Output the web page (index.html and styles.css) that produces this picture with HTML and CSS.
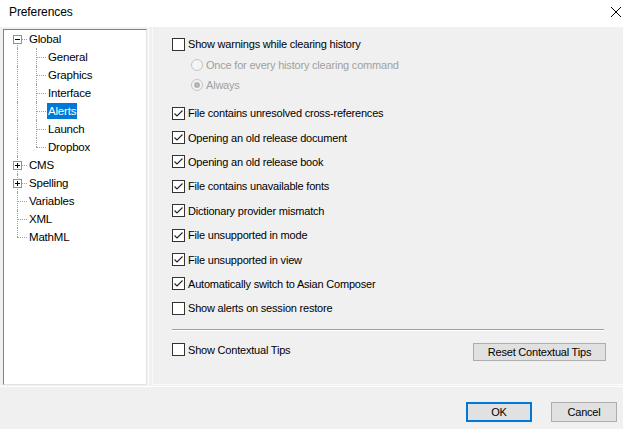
FILE: index.html
```html
<!DOCTYPE html>
<html>
<head>
<meta charset="utf-8">
<title>Preferences</title>
<link rel="stylesheet" href="styles.css">
</head>
<body>
<div class="window">
  <div class="titlebar">
    <span class="title">Preferences</span>
    <svg class="close" width="10" height="10" viewBox="0 0 10 10"><path d="M0 0 L10 10 M10 0 L0 10" stroke="#000" stroke-width="1" fill="none"/></svg>
  </div>
  <div class="main">
    <div class="tree">
      <div class="trow"><span class="cell vfirst hz"><span class="exp minus"></span></span><span class="label">Global</span></div>
      <div class="trow"><span class="cell vfull"></span><span class="cell vfull hz"></span><span class="label">General</span></div>
      <div class="trow"><span class="cell vfull"></span><span class="cell vfull hz"></span><span class="label">Graphics</span></div>
      <div class="trow"><span class="cell vfull"></span><span class="cell vfull hz"></span><span class="label">Interface</span></div>
      <div class="trow"><span class="cell vfull"></span><span class="cell vfull hz"></span><span class="label selected">Alerts</span></div>
      <div class="trow"><span class="cell vfull"></span><span class="cell vfull hz"></span><span class="label">Launch</span></div>
      <div class="trow"><span class="cell vfull"></span><span class="cell vlast hz"></span><span class="label">Dropbox</span></div>
      <div class="trow"><span class="cell vfull hz"><span class="exp plus"></span></span><span class="label">CMS</span></div>
      <div class="trow"><span class="cell vfull hz"><span class="exp plus"></span></span><span class="label">Spelling</span></div>
      <div class="trow"><span class="cell vfull hz"></span><span class="label">Variables</span></div>
      <div class="trow"><span class="cell vfull hz"></span><span class="label">XML</span></div>
      <div class="trow"><span class="cell vlast hz"></span><span class="label">MathML</span></div>
    </div>
    <div class="panel">
      <div class="panel-inner">
        <div class="opt first">
          <svg class="cb" viewBox="0 0 13 13"><rect x="0.5" y="0.5" width="12" height="12" fill="#fff" stroke="#333"/></svg>
          <span>Show warnings while clearing history</span>
        </div>
        <div class="opt sub r1 disabled">
          <span class="rb"></span><span>Once for every history clearing command</span>
        </div>
        <div class="opt sub r2 disabled">
          <span class="rb on"></span><span>Always</span>
        </div>
        <div class="alerts">
          <div class="opt row"><svg class="cb" viewBox="0 0 13 13"><rect x="0.5" y="0.5" width="12" height="12" fill="#fff" stroke="#333"/><path d="M2.5 6.5 L5 9 L10.5 3.5" fill="none" stroke="#222" stroke-width="1.1"/></svg><span>File contains unresolved cross-references</span></div>
          <div class="opt row"><svg class="cb" viewBox="0 0 13 13"><rect x="0.5" y="0.5" width="12" height="12" fill="#fff" stroke="#333"/><path d="M2.5 6.5 L5 9 L10.5 3.5" fill="none" stroke="#222" stroke-width="1.1"/></svg><span>Opening an old release document</span></div>
          <div class="opt row"><svg class="cb" viewBox="0 0 13 13"><rect x="0.5" y="0.5" width="12" height="12" fill="#fff" stroke="#333"/><path d="M2.5 6.5 L5 9 L10.5 3.5" fill="none" stroke="#222" stroke-width="1.1"/></svg><span>Opening an old release book</span></div>
          <div class="opt row"><svg class="cb" viewBox="0 0 13 13"><rect x="0.5" y="0.5" width="12" height="12" fill="#fff" stroke="#333"/><path d="M2.5 6.5 L5 9 L10.5 3.5" fill="none" stroke="#222" stroke-width="1.1"/></svg><span>File contains unavailable fonts</span></div>
          <div class="opt row"><svg class="cb" viewBox="0 0 13 13"><rect x="0.5" y="0.5" width="12" height="12" fill="#fff" stroke="#333"/><path d="M2.5 6.5 L5 9 L10.5 3.5" fill="none" stroke="#222" stroke-width="1.1"/></svg><span>Dictionary provider mismatch</span></div>
          <div class="opt row"><svg class="cb" viewBox="0 0 13 13"><rect x="0.5" y="0.5" width="12" height="12" fill="#fff" stroke="#333"/><path d="M2.5 6.5 L5 9 L10.5 3.5" fill="none" stroke="#222" stroke-width="1.1"/></svg><span>File unsupported in mode</span></div>
          <div class="opt row"><svg class="cb" viewBox="0 0 13 13"><rect x="0.5" y="0.5" width="12" height="12" fill="#fff" stroke="#333"/><path d="M2.5 6.5 L5 9 L10.5 3.5" fill="none" stroke="#222" stroke-width="1.1"/></svg><span>File unsupported in view</span></div>
          <div class="opt row"><svg class="cb" viewBox="0 0 13 13"><rect x="0.5" y="0.5" width="12" height="12" fill="#fff" stroke="#333"/><path d="M2.5 6.5 L5 9 L10.5 3.5" fill="none" stroke="#222" stroke-width="1.1"/></svg><span>Automatically switch to Asian Composer</span></div>
          <div class="opt row"><svg class="cb" viewBox="0 0 13 13"><rect x="0.5" y="0.5" width="12" height="12" fill="#fff" stroke="#333"/></svg><span>Show alerts on session restore</span></div>
        </div>
        <div class="sep"></div>
        <div class="tips-row">
          <div class="opt"><svg class="cb" viewBox="0 0 13 13"><rect x="0.5" y="0.5" width="12" height="12" fill="#fff" stroke="#333"/></svg><span>Show Contextual Tips</span></div>
          <button class="btn reset">Reset Contextual Tips</button>
        </div>
      </div>
    </div>
  </div>
  <div class="footer">
    <button class="btn ok">OK</button>
    <button class="btn cancel">Cancel</button>
  </div>
</div>
</body>
</html>
```

FILE: styles.css
```css
* { box-sizing: border-box; }
html, body { margin: 0; padding: 0; }
body {
  width: 623px;
  height: 429px;
  overflow: hidden;
  background: #f0f0f0;
  font-family: "Liberation Sans", Arial, sans-serif;
  font-size: 11px;
  letter-spacing: -0.2px;
  color: #000;
}
.window { width: 623px; height: 429px; display: flex; flex-direction: column; }

.titlebar {
  height: 27px;
  background: #fff;
  display: flex;
  align-items: flex-start;
  flex: none;
}
.title { padding-left: 9px; line-height: 24px; font-size: 12px; letter-spacing: -0.1px; }
.close { margin-left: auto; margin-right: 2px; margin-top: 7px; }

.main {
  height: 359px;
  flex: none;
  display: flex;
  padding: 2px 0 0 3px;
}

.tree {
  width: 144px;
  height: 356px;
  flex: none;
  background: #fff;
  border-top: 1px solid #828282;
  border-left: 1px solid #828282;
  border-right: 1px solid #e3e3e3;
  border-bottom: 1px solid #e3e3e3;
  padding-left: 4px;
}
.trow { height: 18px; display: flex; align-items: center; }
.cell { width: 19px; height: 18px; flex: none; position: relative; }
.cell::before {
  content: "";
  position: absolute;
  left: 9px;
  border-left: 1px dotted #a0a0a0;
}
.vfull::before { top: 0; bottom: 0; }
.vfirst::before { top: 9px; bottom: 0; }
.vlast::before { top: 0; height: 9px; }
.hz::after {
  content: "";
  position: absolute;
  left: 9px;
  top: 9px;
  width: 10px;
  border-top: 1px dotted #a0a0a0;
}
.exp {
  position: absolute;
  left: 5px;
  top: 5px;
  width: 9px;
  height: 9px;
  border: 1px solid #919191;
  background: #fff;
  z-index: 1;
}
.exp::before {
  content: "";
  position: absolute;
  left: 1px;
  top: 3px;
  width: 5px;
  height: 1px;
  background: #000;
}
.plus::after {
  content: "";
  position: absolute;
  left: 3px;
  top: 1px;
  width: 1px;
  height: 5px;
  background: #000;
}
.label {
  margin-left: 1px;
  padding: 0 1px;
  height: 16px;
  line-height: 16px;
  white-space: nowrap;
  font-size: 11.5px;
}
.label.selected { background: #0078d7; color: #fff; }

.panel {
  margin-left: 1px;
  flex: 1;
  height: 359px;
  margin-top: -2px;
  border-left: 1px solid #fff;
  padding: 0 0 1px 3px;
}
.panel-inner {
  height: 100%;
  border-left: 1px solid #fafafa;
  border-bottom: 1px solid #fafafa;
  padding: 7px 17px 0 19px;
}

.opt { display: flex; align-items: center; height: 20px; white-space: nowrap; }
.cb { width: 13px; height: 13px; flex: none; margin-right: 3px; }
.sub { padding-left: 19px; }
.r1 { height: 21px; }
.disabled { color: #a0a0a0; }
.rb {
  width: 12px;
  height: 12px;
  border-radius: 50%;
  border: 1px solid #c4c4c4;
  background: #f4f4f4;
  margin-right: 3px;
  flex: none;
  display: flex;
  align-items: center;
  justify-content: center;
}
.rb.on::before {
  content: "";
  width: 6px;
  height: 6px;
  border-radius: 50%;
  background: #b4b4b4;
}
.alerts { margin-top: 6px; }
.opt.row { height: 24.4px; }

.sep {
  margin-top: 8px;
  margin-right: 2px;
  border-top: 1px solid #a0a0a0;
  border-bottom: 1px solid #fff;
}
.tips-row {
  margin-top: 9px;
  display: flex;
  align-items: flex-start;
  justify-content: space-between;
}
.btn {
  font-family: inherit;
  font-size: 11px;
  letter-spacing: -0.2px;
  color: #000;
  background: #e1e1e1;
  border: 1px solid #adadad;
  padding: 0;
  margin: 0;
  height: 20px;
}
.reset { width: 133px; height: 18px; margin-top: 3px; line-height: 16px; }

.footer {
  flex: 1;
  border-top: 1px solid #fff;
  display: flex;
  justify-content: flex-end;
  align-items: flex-start;
  padding: 15px 6px 0 0;
  gap: 19px;
}
.ok, .cancel { width: 66px; }
.ok { border: 2px solid #0078d7; }
```
